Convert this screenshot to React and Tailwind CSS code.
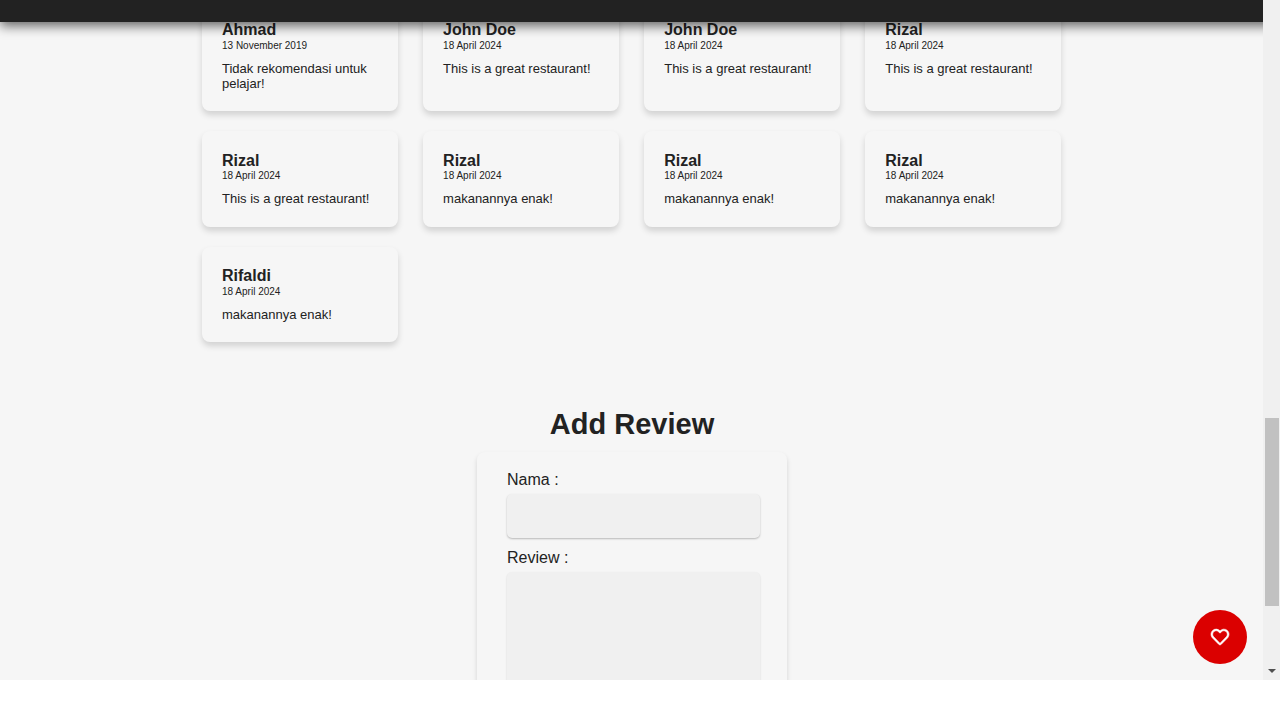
import { FaRegHeart } from "react-icons/fa";

const rows = [
  {
    padding: "pt-[21px]",
    nameLine: "leading-[18px]",
    reviews: [
      ["Ahmad", "13 November 2019", "Tidak rekomendasi untuk pelajar!"],
      ["John Doe", "18 April 2024", "This is a great restaurant!"],
      ["John Doe", "18 April 2024", "This is a great restaurant!"],
      ["Rizal", "18 April 2024", "This is a great restaurant!"],
    ],
  },
  {
    padding: "pt-5",
    nameLine: "pt-px leading-[17px]",
    reviews: [
      ["Rizal", "18 April 2024", "This is a great restaurant!"],
      ["Rizal", "18 April 2024", "makanannya enak!"],
      ["Rizal", "18 April 2024", "makanannya enak!"],
      ["Rizal", "18 April 2024", "makanannya enak!"],
    ],
  },
  {
    padding: "pt-5",
    nameLine: "leading-[18px]",
    reviews: [["Rifaldi", "18 April 2024", "makanannya enak!"]],
  },
];

function ReviewCard({ review: [name, date, text], padding, nameLine }) {
  return (
    <article className={`rounded-lg bg-[#f6f6f6] px-5 shadow-[0_4px_6px_rgba(0,0,0,0.15)] ${padding}`}>
      <h3 className={`text-base font-bold ${nameLine}`}>{name}</h3>
      <p className="mt-px text-[10px] leading-[11px]">{date}</p>
      <p className="mt-[10px] text-[13px] leading-[15px]">{text}</p>
    </article>
  );
}

export default function App() {
  return (
    <div className="h-[720px] overflow-hidden bg-white font-['Liberation_Sans',Arial,sans-serif] text-[#222]">
      <div className="relative flex h-[680px] overflow-hidden bg-[#f6f6f6]">
        <div className="relative h-full w-[1263px] overflow-hidden">
          <header className="relative z-10 h-[22px] w-[1280px] bg-[#222] shadow-[0_4px_12px_rgba(0,0,0,0.6)]" />
          <main>
            <section className="-mt-[22px] ml-[202px] grid w-[860px] grid-cols-[repeat(4,196px)] grid-rows-[111px_96px_95px] gap-x-[25.1px] gap-y-5">
              {rows.flatMap(({ padding, nameLine, reviews }, r) =>
                reviews.map((review, i) => (
                  <ReviewCard key={`${r}-${i}`} review={review} padding={padding} nameLine={nameLine} />
                ))
              )}
            </section>
            <section className="flex flex-col items-center pt-[65px]">
              <h2 className="pl-px text-[29px] leading-[34px] font-bold">Add Review</h2>
              <form className="mt-[11px] h-[400px] w-[310px] rounded-lg bg-[#f6f6f6] pt-[19px] pr-[26px] pl-[30px] shadow-[0_3px_5px_rgba(0,0,0,0.14)]">
                <label htmlFor="nama" className="block pl-[0.5px] leading-[18px]">Nama :</label>
                <input id="nama" className="mt-[5px] block h-11 w-[253.5px] rounded-[5px] bg-[#f0f0f0] shadow-[0_1px_2px_rgba(0,0,0,0.25)] outline-none" />
                <label htmlFor="review" className="mt-[11px] block pl-[0.5px] leading-[18px]">Review :</label>
                <textarea id="review" className="mt-[5px] block h-[200px] w-[253.5px] resize-none rounded-[5px] bg-[#f0f0f0] shadow-[0_1px_2px_rgba(0,0,0,0.15)] outline-none" />
              </form>
            </section>
          </main>
          <button aria-label="like" className="absolute top-[609.5px] left-[1192.7px] flex size-[54.4px] items-center justify-center rounded-full bg-[#db0000] text-white">
            <FaRegHeart className="size-[18px] overflow-visible" stroke="currentColor" strokeWidth="16" />
          </button>
        </div>
        <div className="flex w-[17px] flex-col items-center bg-[#f0f0f0] pt-[418px]">
          <div className="h-[188px] w-[14px] bg-[#c1c1c1]" />
          <svg className="mt-[63px]" width="8" height="4" viewBox="0 0 8 4">
            <path d="M0 0h8L4 4z" fill="#505050" />
          </svg>
        </div>
      </div>
    </div>
  );
}
